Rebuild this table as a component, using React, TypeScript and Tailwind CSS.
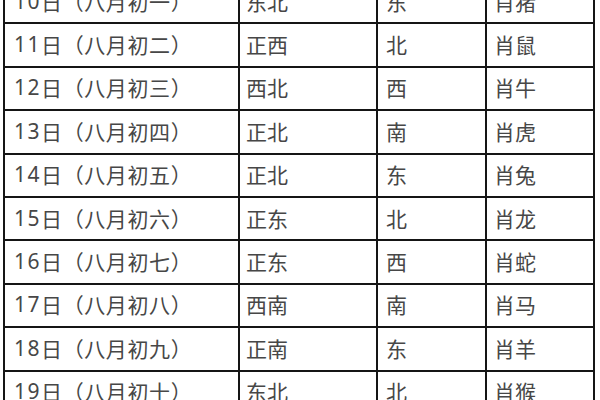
type Row = {
  day: string;
  dir: string;
  sha: string;
  zodiac: string;
};

const ROWS: Row[] = [
  { day: "10日（八月初一）", dir: "东北", sha: "东", zodiac: "肖猪" },
  { day: "11日（八月初二）", dir: "正西", sha: "北", zodiac: "肖鼠" },
  { day: "12日（八月初三）", dir: "西北", sha: "西", zodiac: "肖牛" },
  { day: "13日（八月初四）", dir: "正北", sha: "南", zodiac: "肖虎" },
  { day: "14日（八月初五）", dir: "正北", sha: "东", zodiac: "肖兔" },
  { day: "15日（八月初六）", dir: "正东", sha: "北", zodiac: "肖龙" },
  { day: "16日（八月初七）", dir: "正东", sha: "西", zodiac: "肖蛇" },
  { day: "17日（八月初八）", dir: "西南", sha: "南", zodiac: "肖马" },
  { day: "18日（八月初九）", dir: "正南", sha: "东", zodiac: "肖羊" },
  { day: "19日（八月初十）", dir: "东北", sha: "北", zodiac: "肖猴" },
];

// digits in the original are wide and thin, so they get their own face
function Day({ text }: { text: string }) {
  const m = text.match(/^(\d+)(.*)$/);
  if (!m) return <>{text}</>;
  return (
    <>
      <span
        className="tracking-[1.5px]"
        style={{ fontFamily: '"Noto Sans", sans-serif' }}
      >
        {m[1]}
      </span>
      <span className="tracking-[0.6px]">{m[2]}</span>
    </>
  );
}

export default function App() {
  return (
    <div className="h-[400px] w-[600px] overflow-hidden bg-white">
      <div
        className="-mt-[19px] ml-[3px] w-[592px] border-x-2 border-[#151515] text-[21px] leading-none text-[#474747]"
        style={{ fontFamily: '"Noto Sans CJK SC", "Noto Sans", sans-serif' }}
      >
        {ROWS.map((r) => (
          <div
            key={r.day}
            className="grid h-[43.4px] grid-cols-[235px_138px_109px_1fr] border-b-2 border-[#151515]"
          >
            <div className="flex items-center border-r-2 border-[#151515] pb-[1px] pl-[9px]">
              <Day text={r.day} />
            </div>
            <div className="flex items-center border-r-2 border-[#151515] pb-[1px] pl-[6px]">
              {r.dir}
            </div>
            <div className="flex items-center border-r-2 border-[#151515] pb-[1px] pl-[8px]">
              {r.sha}
            </div>
            <div className="flex items-center pb-[1px] pl-[7px]">{r.zodiac}</div>
          </div>
        ))}
      </div>
    </div>
  );
}
